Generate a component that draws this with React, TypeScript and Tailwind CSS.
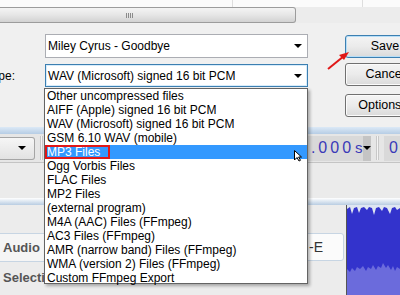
import React from "react";

const formats = [
  "Other uncompressed files",
  "AIFF (Apple) signed 16 bit PCM",
  "WAV (Microsoft) signed 16 bit PCM",
  "GSM 6.10 WAV (mobile)",
  "MP3 Files",
  "Ogg Vorbis Files",
  "FLAC Files",
  "MP2 Files",
  "(external program)",
  "M4A (AAC) Files (FFmpeg)",
  "AC3 Files (FFmpeg)",
  "AMR (narrow band) Files (FFmpeg)",
  "WMA (version 2) Files (FFmpeg)",
  "Custom FFmpeg Export",
];

const Caret = () => (
  <svg width="8" height="4" viewBox="0 0 8 4">
    <polygon points="0,0 8,0 4,4" fill="#000" />
  </svg>
);

const Btn = ({ label, primary }: { label: string; primary?: boolean }) => (
  <div
    className={`h-[23px] w-[80px] rounded-[3px] border flex items-center justify-center text-[12.5px] whitespace-nowrap bg-linear-to-b from-[#f4f4f4] via-[#ebebeb] to-[#dadada] ${
      primary
        ? "border-[#3c7fb1] shadow-[inset_0_0_0_1px_#b7def7]"
        : "border-[#707070] shadow-[inset_0_0_0_1px_#fbfbfb]"
    }`}
  >
    {label}
  </div>
);

const Wave = () => (
  <svg width="53" height="90" viewBox="0 0 53 90">
    <rect x="0" y="0" width="53" height="90" fill="#dfe6f2" />
    <rect x="0" y="50" width="53" height="40" fill="#6b6bdc" />
    <polygon
      fill="#3333cc"
      points="0,4 3,2 5,9 7,3 10,2 12,8 14,3 17,2 20,5 22,2 25,3 27,10 29,3 32,2 35,6 37,2 40,3 43,9 45,3 48,2 50,5 53,3 53,64 50,62 48,66 46,61 44,65 41,60 39,63 36,58 34,63 31,61 29,65 26,60 24,64 21,62 19,66 16,61 13,64 10,62 8,66 5,63 3,67 0,64"
    />
  </svg>
);

export default function App() {
  return (
    <div className="relative w-[400px] h-[295px] overflow-hidden flex flex-col bg-[#f0f0f0] font-['Liberation_Sans',Arial,sans-serif] text-black">
      {/* window strip above */}
      <div className="h-[7px] shrink-0 flex bg-[#fbfbfb]">
        <div className="w-[232px]" />
        <div className="w-px bg-[#dedede]" />
        <div className="w-[129px]" />
        <div className="w-px bg-[#dedede]" />
      </div>

      {/* horizontal scrollbar */}
      <div className="h-[16px] shrink-0 flex bg-[#ececec]">
        <div className="w-[296px] rounded-r-[3px] border border-l-0 border-[#9c9c9c] bg-linear-to-b from-[#f4f4f4] via-[#e6e6e6] to-[#d2d2d2] flex items-center justify-center">
          <div className="flex gap-[1px] -ml-[36px]">
            <div className="w-px h-[5px] bg-[#8a8a8a]" />
            <div className="w-px h-[5px] bg-[#8a8a8a]" />
            <div className="w-px h-[5px] bg-[#8a8a8a]" />
            <div className="w-px h-[5px] bg-[#8a8a8a]" />
          </div>
        </div>
      </div>

      {/* save dialog */}
      <div className="h-[104px] shrink-0 flex bg-[#f0f0f0]">
        <div className="w-[345px] shrink-0 pt-[11px] flex flex-col">
          <div className="ml-[45px] w-[263px] h-[24px] border border-[#abadb3] bg-white flex items-center pl-[2px] pr-[5px] text-[12px]">
            <span className="flex-1">Miley Cyrus - Goodbye</span>
            <Caret />
          </div>
          <div className="mt-[6px] flex items-center h-[23px]">
            <div className="w-[15px] shrink-0 overflow-hidden flex justify-end whitespace-nowrap text-[12px]">
              Save as type:
            </div>
            <div className="ml-[30px] w-[263px] h-[23px] border border-[#3c7fb1] bg-white shadow-[inset_0_0_0_1px_#d7ecfb] flex items-center pl-[2px] pr-[5px] text-[12px]">
              <span className="flex-1">WAV (Microsoft) signed 16 bit PCM</span>
              <Caret />
            </div>
          </div>
        </div>
        <div className="shrink-0 pt-[12px] flex flex-col">
          <Btn label="Save" primary />
          <div className="mt-[5px]">
            <Btn label="Cancel" />
          </div>
          <div className="mt-[8px]">
            <Btn label="Options..." />
          </div>
        </div>
      </div>

      {/* audacity main window behind */}
      <div className="h-[7px] shrink-0 bg-linear-to-b from-[#dce9f6] to-[#b6cde5]" />
      <div className="h-[29px] shrink-0 flex items-center bg-[#e6e6e6] border-b border-[#c4c4c4]">
        <div className="w-[35px] shrink-0 h-[23px] rounded-r-[3px] border border-l-0 border-[#a5a5a5] bg-linear-to-b from-[#f6f6f6] to-[#e2e2e2] flex items-center justify-end pr-[8px]">
          <Caret />
        </div>
        <div className="ml-[5px] shrink-0 w-[3px] h-[24px] border-x border-[#c8c8c8] bg-[#f4f4f4]" />
        <div className="ml-[253px] shrink-0 w-[73px] h-[25px] bg-[#d9d9d9] flex items-center text-[16px] text-[#3a3ab8] whitespace-nowrap">
          <span className="flex-1 pl-[3px]">
            <span className="tracking-[3px]">0.000</span>
            <span className="ml-[1px] text-[15px]">s</span>
          </span>
          <div className="w-[10px] h-full bg-[#c4c4c4] flex items-center justify-center">
            <Caret />
          </div>
        </div>
        <div className="ml-[7px] shrink-0 w-[3px] h-[24px] border-x border-[#c8c8c8] bg-[#f4f4f4]" />
        <div className="ml-[5px] flex-1 h-[25px] bg-[#d9d9d9] flex items-center text-[16px] text-[#3a3ab8] pl-[5px]">
          0
        </div>
      </div>
      <div className="h-[35px] shrink-0 bg-[#ebebeb]" />
      <div className="h-[7px] shrink-0 bg-linear-to-b from-[#ffffff] to-[#b9cde2]" />
      <div className="h-[90px] shrink-0 flex bg-[#ececec]">
        <div className="flex-1 flex justify-between pt-[28px] pr-[2px]">
          <div className="w-[44px] overflow-hidden flex flex-col">
            <div className="w-[45px] h-[29px] border border-l-0 border-[#c7d5e3] bg-[#f5f5f5] flex items-center pl-[3px] text-[13px] font-bold text-[#555]">
              Audio
            </div>
            <div className="mt-[6px] pl-[3px] text-[13px] font-bold text-[#555] whitespace-nowrap">Selecti</div>
          </div>
          <div className="w-[43px] h-[28px] rounded-[3px] border border-[#c7d5e3] bg-[#fbfbfb] flex items-center pl-[7px] text-[14px] text-[#333]">
            -E
          </div>
        </div>
        <div className="w-px bg-[#555]" />
        <Wave />
      </div>

      {/* dropdown list */}
      <div className="absolute left-[44px] top-[88px] w-[264px] h-[196px] border border-[#646464] bg-white shadow-[2px_2px_3px_rgba(0,0,0,0.3)] text-[12px]">
        {formats.map((f) => (
          <div
            key={f}
            className={`relative h-[14px] leading-[14px] pl-[2px] whitespace-nowrap ${
              f === "MP3 Files" ? "bg-[#3399ff] text-white" : ""
            }`}
          >
            {f}
            {f === "MP3 Files" && (
              <div className="absolute left-0 top-0 w-[65px] h-[14px] border-2 border-[#e01818]" />
            )}
          </div>
        ))}
      </div>

      {/* mouse cursor */}
      <svg className="absolute left-[294px] top-[150px]" width="8" height="12" viewBox="0 0 8 12">
        <polygon points="0.5,0.5 0.5,10 3,7.5 5,11 6.5,10.3 4.6,7 7.5,7" fill="#fff" stroke="#000" strokeWidth="1" />
      </svg>

      {/* red annotation arrow */}
      <svg className="absolute left-[324px] top-[47px]" width="30" height="26" viewBox="0 0 30 26">
        <line x1="4" y1="22" x2="20" y2="9" stroke="#e01818" strokeWidth="2" />
        <polygon points="25,5 15,8 20,13" fill="#e01818" />
      </svg>
    </div>
  );
}
